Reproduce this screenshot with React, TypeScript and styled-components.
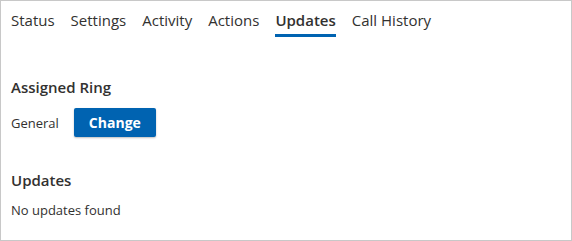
import React from "react";
import styled, { createGlobalStyle } from "styled-components";

const Global = createGlobalStyle`
  html, body { margin: 0; padding: 0; background: #ffffff; }
  body { font-family: "Segoe UI", "Open Sans", "Noto Sans", sans-serif; color: #323130; }
`;

const Frame = styled.div`
  box-sizing: border-box;
  width: 572px;
  height: 241px;
  border: 1px solid #c8c8c8;
  padding: 0 10px;
  background: #fff;
`;

const TabBar = styled.nav`
  display: flex;
  gap: 16px;
  height: 36px;
  align-items: stretch;
`;

const Tab = styled.button<{ $active?: boolean }>`
  border: none;
  background: none;
  margin: 0;
  padding: 5px 0 0;
  font-family: inherit;
  font-size: 15px;
  color: #323130;
  font-weight: ${(p) => (p.$active ? 600 : 400)};
  cursor: pointer;
  display: flex;
  align-items: center;
  border-bottom: 3px solid ${(p) => (p.$active ? "#0063b1" : "transparent")};
  box-sizing: border-box;
`;

const Section = styled.section<{ $top: number }>`
  margin-top: ${(p) => p.$top}px;
`;

const Heading = styled.h2`
  margin: 0;
  font-size: 15px;
  font-weight: 600;
  color: #323130;
  line-height: 20px;
`;

const Row = styled.div`
  display: flex;
  align-items: center;
  gap: 15px;
  margin-top: 11px;
`;

const Label = styled.span`
  font-size: 13px;
  color: #323130;
`;

const PrimaryButton = styled.button`
  width: 82px;
  height: 29px;
  border: none;
  border-radius: 2px;
  background: #0063b1;
  color: #fff;
  font-family: inherit;
  font-size: 14px;
  font-weight: 700;
  box-shadow: 0 1px 2px rgba(0, 0, 0, 0.25);
  cursor: pointer;
`;

const Text = styled.p`
  margin: 11px 0 0;
  font-size: 13px;
  color: #323130;
`;

export default function App() {
  const tabs = ["Status", "Settings", "Activity", "Actions", "Updates", "Call History"];
  return (
    <>
      <Global />
      <Frame>
        <TabBar>
          {tabs.map((t) => (
            <Tab key={t} $active={t === "Updates"}>
              {t}
            </Tab>
          ))}
        </TabBar>
        <Section $top={40}>
          <Heading>Assigned Ring</Heading>
          <Row>
            <Label>General</Label>
            <PrimaryButton>Change</PrimaryButton>
          </Row>
        </Section>
        <Section $top={33}>
          <Heading>Updates</Heading>
          <Text>No updates found</Text>
        </Section>
      </Frame>
    </>
  );
}
